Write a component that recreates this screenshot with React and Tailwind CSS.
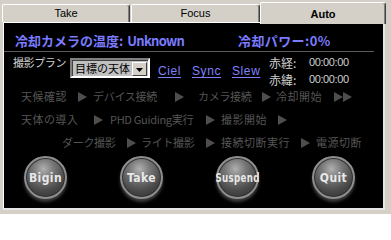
import React from "react";

const jp = "font-['Noto_Sans_CJK_JP',sans-serif]";

function Tri() {
  return (
    <svg width="9" height="10" viewBox="0 0 9 10" className="shrink-0">
      <polygon points="0,0 9,5 0,10" fill="#4e4e4e" />
    </svg>
  );
}

function Step({ children, w, tight }) {
  return (
    <span className={`${w} shrink-0 whitespace-nowrap ${tight ? "tracking-[-0.3px]" : "tracking-[0.5px]"}`}>
      {children}
    </span>
  );
}

function Arrow({ w, double }) {
  return (
    <span className={`${w} shrink-0 flex`}>
      <Tri />
      {double ? <Tri /> : null}
    </span>
  );
}

function RoundBtn({ label, small }) {
  return (
    <div className="flex flex-col items-center w-[43px]">
      <div className="w-[43px] h-[43px] rounded-full border-2 border-[#8e8e8e] bg-[radial-gradient(circle_at_45%_28%,#b0b0b0_0%,#767676_30%,#4a4a4a_62%,#2a2a2a_100%)] shadow-[inset_0_0_0_1px_#303030,0_3px_3px_rgba(110,110,110,0.55)] flex items-center justify-center">
        <span
          className={`font-['DejaVu_Sans_Condensed','DejaVu_Sans',sans-serif] font-bold text-[#e8e8e8] text-[12px] leading-none tracking-[0.4px] ${small ? "scale-x-[0.8]" : ""}`}
        >
          {label}
        </span>
      </div>
    </div>
  );
}

export default function App() {
  return (
    <div className="w-[391px] h-[214px] bg-[#d4d0c8] overflow-hidden font-['Liberation_Sans',sans-serif]">
      {/* tabs */}
      <div className="flex items-end h-[22px] pl-[2px]">
        <div className="w-[128px] h-[18px] bg-[#d4d0c8] border-t border-l border-white border-r border-r-[#404040] rounded-tr-[3px] rounded-tl-[2px] flex items-center justify-center text-[11px] text-black shadow-[inset_-1px_0_0_#808080]">
          Take
        </div>
        <div className="ml-[1px] w-[129px] h-[18px] bg-[#d4d0c8] border-t border-l border-white border-r border-r-[#404040] rounded-tr-[3px] rounded-tl-[2px] flex items-center justify-center text-[11px] text-black shadow-[inset_-1px_0_0_#808080]">
          Focus
        </div>
        <div className="relative z-10 -mb-[2px] w-[126px] h-[22px] bg-[#d4d0c8] border-t border-l border-white border-r border-r-[#404040] rounded-tr-[3px] rounded-tl-[2px] flex items-start pt-[3px] justify-center text-[11px] font-bold text-black shadow-[inset_-1px_0_0_#808080]">
          Auto
        </div>
      </div>

      {/* panel */}
      <div className="ml-[3px] w-[382px] h-[188px] border-l border-t border-white border-r-2 border-b-2 border-r-[#e6e6e6] border-b-[#e6e6e6] bg-black">
        {/* title row */}
        <div className={`${jp} mt-[10px] mr-[9px] h-[19px] pb-[2px] flex items-center border-b border-[#5a5a5a] text-[13px] font-bold text-[#7b7bff] leading-[16px]`}>
          <span className="ml-[11px] w-[223px] shrink-0 whitespace-nowrap">
            冷却カメラの温度:
            <span className="ml-[4px] tracking-[-0.7px]">Unknown</span>
          </span>
          <span className="whitespace-nowrap tracking-[0.4px]">冷却パワー:0%</span>
        </div>

        {/* plan row */}
        <div className="h-[33px] flex items-start">
          <span className={`${jp} ml-[9px] w-[57px] shrink-0 mt-[2px] text-[11px] leading-[17px] tracking-[-0.4px] text-[#cfcfcf] whitespace-nowrap`}>撮影プラン</span>
          <div className="mt-[6px] w-[80px] h-[20px] shrink-0 border-2 border-t-[#808080] border-l-[#808080] border-r-white border-b-white flex">
            <div className="flex-1 bg-[#c0c0c0] border-t border-l border-[#404040] flex items-center">
              <span className={`${jp} ml-[2px] text-[11px] leading-none text-black whitespace-nowrap`}>目標の天体</span>
              <div className="ml-auto mr-[1px] w-[15px] h-[14px] bg-[#d4d0c8] border border-t-white border-l-white border-r-[#404040] border-b-[#404040] flex items-end justify-center pb-[3px]">
                <svg width="7" height="4" viewBox="0 0 7 4">
                  <polygon points="0,0 7,0 3.5,4" fill="#000" />
                </svg>
              </div>
            </div>
          </div>
          <div className="ml-[8px] mt-[12px] flex text-[12px] leading-[14px] text-[#8080ff] tracking-[0.6px]">
            <span className="w-[34px] shrink-0"><span className="underline underline-offset-[2px]">Ciel</span></span>
            <span className="w-[40px] shrink-0"><span className="underline underline-offset-[2px]">Sync</span></span>
            <span className="w-[37px] shrink-0"><span className="underline underline-offset-[2px]">Slew</span></span>
          </div>
          <div className={`${jp} mt-[2px] flex flex-col text-[12px] leading-[17px] text-[#cfcfcf]`}>
            <div className="flex items-center">
              <span className="w-[40px]">赤経:</span>
              <span className="font-['Liberation_Sans',sans-serif] text-[11px] tracking-[-0.4px]">00:00:00</span>
            </div>
            <div className="flex items-center">
              <span className="w-[40px]">赤緯:</span>
              <span className="font-['Liberation_Sans',sans-serif] text-[11px] tracking-[-0.4px]">00:00:00</span>
            </div>
          </div>
        </div>

        {/* flow rows */}
        <div className={`${jp} text-[11px] text-[#555555] leading-[23px]`}>
          <div className="flex items-center h-[23px] pl-[17px]">
            <Step w="w-[57px]">天候確認</Step>
            <Arrow w="w-[15px]" />
            <Step w="w-[82px]" tight>デバイス接続</Step>
            <Arrow w="w-[23px]" />
            <Step w="w-[64px]" tight>カメラ接続</Step>
            <Arrow w="w-[14px]" />
            <Step w="w-[58px]">冷却開始</Step>
            <Arrow w="w-[20px]" double />
          </div>
          <div className="flex items-center h-[23px] pl-[17px]">
            <Step w="w-[73px]">天体の導入</Step>
            <Arrow w="w-[16px]" />
            <Step w="w-[96px]" tight>PHD Guiding実行</Step>
            <Arrow w="w-[15px]" />
            <Step w="w-[57px]">撮影開始</Step>
            <Arrow w="w-[10px]" />
          </div>
          <div className="flex items-center h-[23px] pl-[58px]">
            <Step w="w-[65px]" tight>ダーク撮影</Step>
            <Arrow w="w-[14px]" />
            <Step w="w-[65px]" tight>ライト撮影</Step>
            <Arrow w="w-[15px]" />
            <Step w="w-[80px]">接続切断実行</Step>
            <Arrow w="w-[15px]" />
            <Step w="w-[50px]">電源切断</Step>
          </div>
        </div>

        {/* buttons */}
        <div className="mt-[2px] pl-[20px] flex gap-[53px]">
          <RoundBtn label="Bigin" />
          <RoundBtn label="Take" />
          <RoundBtn label="Suspend" small />
          <RoundBtn label="Quit" />
        </div>
      </div>
    </div>
  );
}
